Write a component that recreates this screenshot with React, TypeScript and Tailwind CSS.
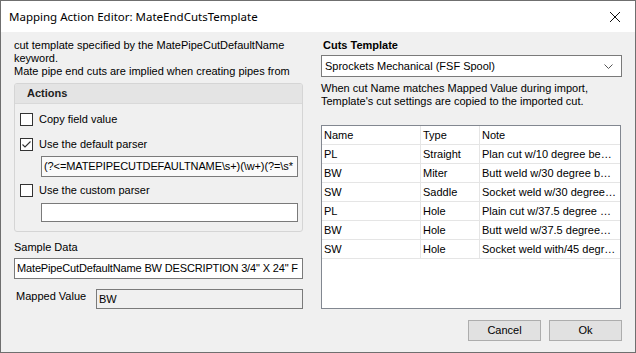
import React from 'react';

const ui = { fontFamily: '"Liberation Sans", Arial, sans-serif' };
const title = { fontFamily: '"Noto Sans", "Open Sans", sans-serif' };

function CheckBox({ checked, label }: { checked?: boolean; label: string }) {
    return (
        <div className="flex items-center h-[13px] gap-[6px]">
            <div className="w-[13px] h-[13px] border border-[#333] bg-white flex items-center justify-center">
                {checked && (
                    <svg width="11" height="11" viewBox="0 0 11 11">
                        <path d="M1.5 5.5 L4 8 L9.5 2.5" fill="none" stroke="#333" strokeWidth="1.1" />
                    </svg>
                )}
            </div>
            <span className="text-[11px] text-black leading-[13px]">{label}</span>
        </div>
    );
}

const cuts = [
    { name: 'PL', type: 'Straight', note: 'Plan cut w/10 degree be…' },
    { name: 'BW', type: 'Miter', note: 'Butt weld w/30 degree b…' },
    { name: 'SW', type: 'Saddle', note: 'Socket weld w/30 degree…' },
    { name: 'PL', type: 'Hole', note: 'Plain cut w/37.5 degree …' },
    { name: 'BW', type: 'Hole', note: 'Butt weld w/37.5 degree…' },
    { name: 'SW', type: 'Hole', note: 'Socket weld with/45 degr…' },
];

export default function App() {
    return (
        <div className="w-[636px] h-[353px] border border-[#6f6f6f] flex flex-col bg-[#f0f0f0]" style={ui}>
            {/* title bar */}
            <div className="h-[31px] bg-white flex items-center justify-between pl-[8px] pr-[14px] shrink-0">
                <span className="text-[11.5px] text-black" style={title}>Mapping Action Editor: MateEndCutsTemplate</span>
                <svg width="12" height="12" viewBox="0 0 12 12">
                    <path d="M1 1 L11 11 M11 1 L1 11" stroke="#111" strokeWidth="1" />
                </svg>
            </div>

            <div className="flex flex-1 pl-[13px]">
                {/* left column */}
                <div className="w-[289px] flex flex-col">
                    <div className="mt-[6px] h-[41px] overflow-hidden text-[11px] leading-[13px] text-black pt-[1px]">
                        <p>cut template specified by the MatePipeCutDefaultName</p>
                        <p>keyword.</p>
                        <p>Mate pipe end cuts are implied when creating pipes from</p>
                    </div>

                    <div className="mt-[4px] h-[149px] border border-[#d5d5d5] rounded-[3px] overflow-hidden flex flex-col">
                        <div className="h-[20px] bg-[#e4e4e4] border-b border-[#d9d9d9] pl-[12px] flex items-center">
                            <span className="text-[11px] font-bold text-[#1e1e1e]">Actions</span>
                        </div>
                        <div className="flex flex-col pl-[5px] pt-[9px]">
                            <CheckBox label="Copy field value" />
                            <div className="mt-[12px]">
                                <CheckBox checked label="Use the default parser" />
                            </div>
                            <div className="mt-[5px] ml-[21px] w-[257px] h-[21px] border border-[#7a7a7a] bg-[#fafafa] flex items-center pl-[2px] overflow-hidden whitespace-nowrap text-[11px] tracking-[-0.1px]">
                                {'(?<=MATEPIPECUTDEFAULTNAME\\s+)(\\w+)(?=\\s*'}
                            </div>
                            <div className="mt-[7px]">
                                <CheckBox label="Use the custom parser" />
                            </div>
                            <div className="mt-[6px] ml-[21px] w-[257px] h-[19px] border border-[#7a7a7a] bg-white" />
                        </div>
                    </div>

                    <span className="mt-[9px] text-[11px] leading-[13px] text-black">Sample Data</span>
                    <div className="mt-[4px] w-[289px] h-[21px] border border-[#7a7a7a] bg-white flex items-center pl-[2px] overflow-hidden whitespace-nowrap text-[11px] tracking-[-0.15px]">
                        MatePipeCutDefaultName BW DESCRIPTION 3/4" X 24" F
                    </div>
                    <div className="mt-[10px] flex items-start">
                        <span className="ml-[2px] mt-[1px] w-[80px] text-[11px] leading-[13px] text-black">Mapped Value</span>
                        <div className="w-[207px] h-[20px] border border-[#7a7a7a] bg-[#f0f0f0] flex items-center pl-[2px] text-[11px]">BW</div>
                    </div>
                </div>

                {/* right column */}
                <div className="ml-[18px] w-[301px] flex flex-col">
                    <span className="mt-[7px] ml-[2px] text-[11px] font-bold leading-[13px] text-black">Cuts Template</span>
                    <div className="mt-[3px] h-[22px] border border-[#7a7a7a] bg-white flex items-center justify-between pl-[3px] pr-[8px] text-[11px]">
                        <span>Sprockets Mechanical (FSF Spool)</span>
                        <svg width="9" height="5" viewBox="0 0 9 5">
                            <path d="M0.5 0.5 L4.5 4.5 L8.5 0.5" fill="none" stroke="#555" strokeWidth="1" />
                        </svg>
                    </div>
                    <div className="mt-[5px] text-[11px] leading-[13px] text-black">
                        <p>When cut Name matches Mapped Value during import,</p>
                        <p>Template's cut settings are copied to the imported cut.</p>
                    </div>

                    <div className="mt-[17px] w-[300px] h-[184px] border border-[#828790] bg-white flex flex-col text-[11px] text-black">
                        <div className="h-[19px] flex bg-white border-b border-[#e5e5e5]">
                            <div className="w-[99px] border-r border-[#e5e5e5] pl-[2px] flex items-center">Name</div>
                            <div className="w-[59px] border-r border-[#e5e5e5] pl-[2px] flex items-center">Type</div>
                            <div className="flex-1 pl-[2px] flex items-center">Note</div>
                        </div>
                        {cuts.map((c, i) => (
                            <div key={i} className="h-[19px] flex border-b border-[#e5e5e5]">
                                <div className="w-[99px] border-r border-[#e5e5e5] pl-[2px] flex items-center">{c.name}</div>
                                <div className="w-[59px] border-r border-[#e5e5e5] pl-[2px] flex items-center">{c.type}</div>
                                <div className="flex-1 pl-[2px] flex items-center whitespace-nowrap overflow-hidden">{c.note}</div>
                            </div>
                        ))}
                    </div>

                    <div className="mt-[11px] flex justify-end gap-[8px]">
                        <button className="w-[73px] h-[21px] border border-[#adadad] bg-[#e1e1e1] text-[11px] text-black">Cancel</button>
                        <button className="w-[73px] h-[21px] border border-[#adadad] bg-[#e1e1e1] text-[11px] text-black">Ok</button>
                    </div>
                </div>
            </div>
        </div>
    );
}
